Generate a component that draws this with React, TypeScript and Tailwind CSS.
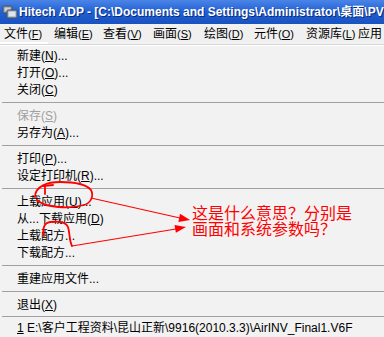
import React from 'react';

type Item = { label: string; key?: string; tail?: string; disabled?: boolean } | 'sep';

const ITEMS: Item[] = [
    { label: '新建', key: 'N', tail: '...' },
    { label: '打开', key: 'O', tail: '...' },
    { label: '关闭', key: 'C' },
    'sep',
    { label: '保存', key: 'S', disabled: true },
    { label: '另存为', key: 'A', tail: '...' },
    'sep',
    { label: '打印', key: 'P', tail: '...' },
    { label: '设定打印机', key: 'R', tail: '...' },
    'sep',
    { label: '上载应用', key: 'U', tail: '...' },
    { label: '从...下载应用', key: 'D' },
    { label: '上载配方...' },
    { label: '下载配方...' },
    'sep',
    { label: '重建应用文件...' },
    'sep',
    { label: '退出', key: 'X' },
];

const MENUBAR = [
    { label: '文件', key: 'F', w: 'w-[50px]' },
    { label: '编辑', key: 'E', w: 'w-[49px]' },
    { label: '查看', key: 'V', w: 'w-[50px]' },
    { label: '画面', key: 'S', w: 'w-[51px]' },
    { label: '绘图', key: 'D', w: 'w-[50px]' },
    { label: '元件', key: 'O', w: 'w-[52px]' },
    { label: '资源库', key: 'L', w: 'w-[52px]' },
    { label: '应用', key: '', w: 'w-[40px]' },
];

const Hotkey: React.FC<{ k: string; small?: boolean }> = ({ k, small }) => (
    <span className={small ? 'text-[11px]' : ''}>(<span className="underline underline-offset-1">{k}</span>)</span>
);

export default function App() {
    return (
        <div className="relative w-[384px] h-[337px] overflow-hidden bg-[#f2f2f2] text-black text-[12px] font-['Liberation_Sans','Noto_Sans_CJK_SC',sans-serif]">
            {/* title bar */}
            <div className="h-[24px] flex items-center bg-linear-to-b from-[#4a85e6] via-[#1f5fd4] to-[#1a52c0] text-white font-bold whitespace-nowrap">
                <svg width="16" height="16" viewBox="0 0 16 16" className="ml-[2px] mr-[1px] shrink-0">
                    <rect x="1" y="2" width="9" height="7" rx="1" fill="#8a94a6" stroke="#4b5363" />
                    <rect x="2.5" y="3.5" width="6" height="4" fill="#c9d2e0" />
                    <rect x="5" y="6" width="10" height="8" rx="1" fill="#9aa3b3" stroke="#4b5363" />
                    <rect x="6.5" y="7.5" width="7" height="5" fill="#dfe5ee" />
                </svg>
                <span className="[text-shadow:1px_1px_0_#0a2a7a]">Hitech ADP - [C:\Documents and Settings\Administrator\桌面\PV</span>
            </div>

            {/* menu bar */}
            <div className="h-[16px] mt-[2px] flex items-center pl-[4px] bg-[#f0f0f0] whitespace-nowrap">
                {MENUBAR.map(m => (
                    <div key={m.label} className={`${m.w} shrink-0 leading-none`}>
                        {m.label}{m.key && <Hotkey k={m.key} small />}
                    </div>
                ))}
            </div>
            <div className="h-[2px] w-[48px] bg-white" />
            <div className="h-px bg-[#d8d8d8]" />
            <div className="h-px bg-white" />

            {/* dropdown */}
            <div className="pt-px flex flex-col">
                {ITEMS.map((it, i) =>
                    it === 'sep' ? (
                        <div key={i} className="h-[9px] flex items-center pl-[2px]">
                            <div className="h-px w-full bg-[#a0a0a0]" />
                        </div>
                    ) : (
                        <div key={i} className={`h-[17px] flex items-center pl-[17px] whitespace-nowrap ${it.disabled ? 'text-[#a0a0a0]' : ''}`}>
                            {it.label}
                            {it.key && <Hotkey k={it.key} />}
                            {it.tail}
                        </div>
                    )
                )}
                <div className="h-[7px] flex items-center pl-[2px]">
                    <div className="h-px w-full bg-[#a0a0a0]" />
                </div>
                <div className="h-[15px] flex items-center pl-[17px] whitespace-nowrap">
                    <span className="underline underline-offset-1">1</span>&nbsp;E:\客户工程资料\昆山正新\9916(2010.3.3)\AirINV_Final1.V6F
                </div>
            </div>

            {/* red annotation marks */}
            <svg className="absolute left-0 top-0 pointer-events-none" width="384" height="337" viewBox="0 0 384 337">
                <g fill="none" stroke="#ff0000" strokeWidth="1.8" strokeLinecap="round" strokeLinejoin="round">
                    <path d="M43 186 L53 185 M45 186 L45 194" />
                    <path d="M35 197 C35 186 48 182 60 182 C72 182 86 184 91 190 C94 196 91 203 84 205 C70 209 45 208 37 200" />
                    <path d="M44 236 C42 229 44 223 50 222 C58 221 66 222 68 227 C70 233 69 240 72 246" />
                </g>
                <g stroke="#ff0000" strokeWidth="1.1">
                    <line x1="91" y1="198" x2="180" y2="218" />
                    <line x1="72" y1="246" x2="176" y2="229" />
                </g>
                <g fill="#ff0000">
                    <polygon points="190,220 180,213.8 178.4,222" />
                    <polygon points="186,227 175.9,232.7 174.5,224.9" />
                </g>
            </svg>
            <div className="absolute left-[192px] top-[204px] flex flex-col text-[16px] text-[#ff0000] font-['Noto_Sans_CJK_SC',sans-serif] whitespace-nowrap">
                <div className="h-[16px] leading-[16px]">这是什么意思？分别是</div>
                <div className="h-[16px] leading-[16px]">画面和系统参数吗？</div>
            </div>
        </div>
    );
}
